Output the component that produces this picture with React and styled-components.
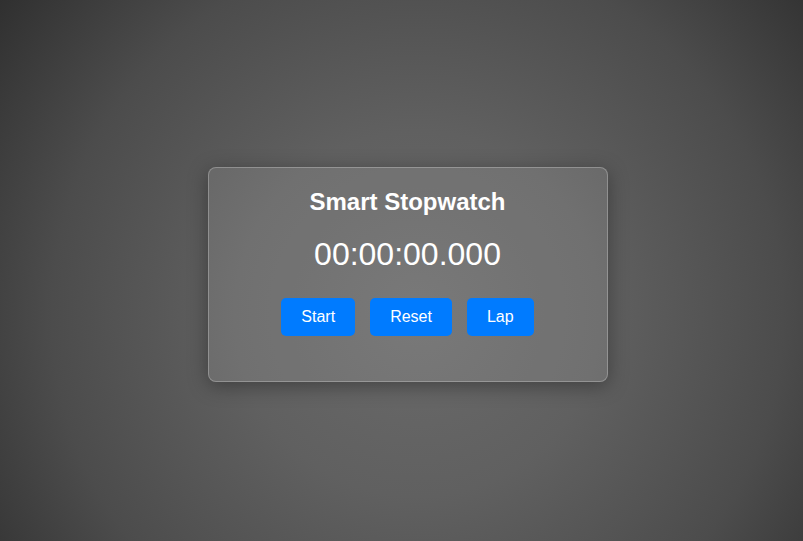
import React, { useState, useEffect, useRef } from 'react';
import styled, { createGlobalStyle } from 'styled-components';

const GlobalStyle = createGlobalStyle`
  html, body {
    margin: 0;
    padding: 0;
    height: 100%;
  }
  body {
    font-family: "Liberation Sans", Arial, sans-serif;
    background: radial-gradient(circle at 52% 58%, #6a6a6a 0%, #606060 35%, #4c4c4c 70%, #303030 100%);
    background-attachment: fixed;
  }
  #root {
    height: 100%;
  }
`;

const Page = styled.div`
  height: 100vh;
  display: flex;
  align-items: center;
  justify-content: center;
`;

const Card = styled.div`
  box-sizing: border-box;
  width: 400px;
  padding: 20px;
  margin: 7px 0 0 12px;
  background: rgba(255, 255, 255, 0.1);
  border: 1px solid rgba(255, 255, 255, 0.25);
  border-radius: 8px;
  box-shadow: 0 4px 20px rgba(0, 0, 0, 0.35);
  text-align: center;
  color: #fff;
`;

const Title = styled.h2`
  margin: 0 0 20px;
  font-size: 24px;
  font-weight: bold;
`;

const Time = styled.div`
  font-size: 32px;
  margin-bottom: 25px;
`;

const Controls = styled.div`
  display: flex;
  justify-content: center;
  gap: 15px;
  margin-bottom: 25px;
`;

const Button = styled.button`
  background-color: #007bff;
  color: #fff;
  border: none;
  border-radius: 5px;
  padding: 10px 20px;
  font-family: "Liberation Sans", Arial, sans-serif;
  font-size: 16px;
  line-height: normal;
  cursor: pointer;

  &:hover {
    background-color: #0069d9;
  }
`;

const LapList = styled.ul`
  list-style: none;
  margin: 0;
  padding: 0;
  font-size: 14px;
`;

const format = (ms) => {
  const h = String(Math.floor(ms / 3600000)).padStart(2, '0');
  const m = String(Math.floor((ms % 3600000) / 60000)).padStart(2, '0');
  const s = String(Math.floor((ms % 60000) / 1000)).padStart(2, '0');
  const milli = String(ms % 1000).padStart(3, '0');
  return `${h}:${m}:${s}.${milli}`;
};

const App = () => {
  const [elapsed, setElapsed] = useState(0);
  const [running, setRunning] = useState(false);
  const [laps, setLaps] = useState([]);
  const startRef = useRef(0);

  useEffect(() => {
    if (!running) return;
    startRef.current = Date.now() - elapsed;
    const id = setInterval(() => setElapsed(Date.now() - startRef.current), 31);
    return () => clearInterval(id);
  }, [running]);

  return (
    <>
      <GlobalStyle />
      <Page>
        <Card>
          <Title>Smart Stopwatch</Title>
          <Time>{format(elapsed)}</Time>
          <Controls>
            <Button onClick={() => setRunning(!running)}>{running ? 'Stop' : 'Start'}</Button>
            <Button onClick={() => { setRunning(false); setElapsed(0); setLaps([]); }}>Reset</Button>
            <Button onClick={() => setLaps([...laps, elapsed])}>Lap</Button>
          </Controls>
          <LapList>
            {laps.map((l, i) => (
              <li key={i}>Lap {i + 1}: {format(l)}</li>
            ))}
          </LapList>
        </Card>
      </Page>
    </>
  );
};

export default App;
